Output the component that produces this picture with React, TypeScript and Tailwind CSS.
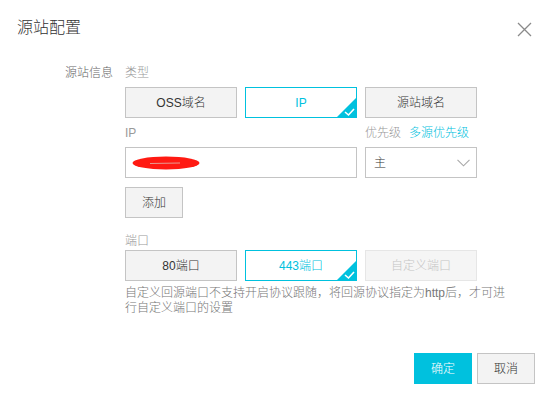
import { ReactNode } from "react";

const FONT = { fontFamily: '"Liberation Sans", "Noto Sans CJK SC", sans-serif' };

const CheckCorner = () => (
  <svg
    className="absolute -right-px -bottom-px"
    width="21"
    height="21"
    viewBox="0 0 21 21"
  >
    <polygon points="21,0 21,21 0,21" fill="#00c1de" />
    <path d="M9 15 L12.5 18 L18 12" fill="none" stroke="#fff" strokeWidth="1.6" />
  </svg>
);

const OptionButton = ({
  children,
  active,
  disabled,
}: {
  children: ReactNode;
  active?: boolean;
  disabled?: boolean;
}) => {
  if (active) {
    return (
      <div className="relative flex h-[31px] w-[112px] items-center justify-center border border-[#00c1de] bg-white text-[12px] text-[#00c1de]">
        {children}
        <CheckCorner />
      </div>
    );
  }
  if (disabled) {
    return (
      <div className="flex h-[31px] w-[112px] items-center justify-center border border-[#e6e6e6] bg-[#f5f5f5] text-[12px] text-[#c5c5c5]">
        {children}
      </div>
    );
  }
  return (
    <div className="flex h-[31px] w-[112px] items-center justify-center border border-[#c4c4c4] bg-[#f3f3f3] text-[12px] text-[#333]">
      {children}
    </div>
  );
};

export default function App() {
  return (
    <div className="relative h-[402px] w-[552px] overflow-hidden bg-white font-light" style={FONT}>
      {/* header */}
      <div className="flex items-center justify-between pl-[17px] pr-[20px] pt-[18px]">
        <h1 className="text-[16px] leading-[20px] text-[#333]">源站配置</h1>
        <svg width="15" height="15" viewBox="0 0 15 15" className="mt-[2px]">
          <path d="M1 1 L14 14 M14 1 L1 14" stroke="#8a8a8a" strokeWidth="1.3" fill="none" />
        </svg>
      </div>

      {/* body */}
      <div className="mt-[26px] flex gap-[12px]">
        <div className="w-[113px] text-right text-[12px] leading-[18px] text-[#666]">源站信息</div>
        <div className="flex flex-col">
          <div className="text-[12px] leading-[18px] text-[#999]">类型</div>
          <div className="mt-[5px] flex gap-[8px]">
            <OptionButton>OSS域名</OptionButton>
            <OptionButton active>IP</OptionButton>
            <OptionButton>源站域名</OptionButton>
          </div>

          <div className="mt-[6px] flex gap-[8px] text-[12px] leading-[18px]">
            <div className="w-[232px] text-[#999]">IP</div>
            <div className="flex gap-[8px]">
              <span className="text-[#999]">优先级</span>
              <span className="text-[#00c1de]">多源优先级</span>
            </div>
          </div>
          <div className="mt-[5px] flex gap-[8px]">
            <div className="flex h-[31px] w-[232px] items-center border border-[#c4c4c4] bg-white pl-[6px]">
              <svg width="68" height="14" viewBox="0 0 68 14">
                <ellipse cx="34" cy="7" rx="33.5" ry="6.5" fill="#ff1a12" />
                <path d="M18 7.5 L48 7" stroke="#e89a90" strokeWidth="1" />
              </svg>
            </div>
            <div className="flex h-[31px] w-[112px] items-center justify-between border border-[#c4c4c4] bg-white pl-[8px] pr-[6px] text-[12px] text-[#333]">
              <span>主</span>
              <svg width="13" height="8" viewBox="0 0 13 8">
                <path d="M0.5 0.8 L6.5 6.8 L12.5 0.8" fill="none" stroke="#a8a8a8" strokeWidth="1.1" />
              </svg>
            </div>
          </div>

          <div className="mt-[9px] flex h-[31px] w-[58px] items-center justify-center border border-[#c4c4c4] bg-[#f3f3f3] text-[12px] text-[#333]">
            添加
          </div>

          <div className="mt-[15px] text-[12px] leading-[17px] text-[#999]">端口</div>
          <div className="flex gap-[8px]">
            <OptionButton>80端口</OptionButton>
            <OptionButton active>443端口</OptionButton>
            <OptionButton disabled>自定义端口</OptionButton>
          </div>
          <p className="mt-[5px] w-[386px] text-[12px] leading-[15px] text-[#777]">
            自定义回源端口不支持开启协议跟随，将回源协议指定为http后，才可进行自定义端口的设置
          </p>
        </div>
      </div>

      {/* footer */}
      <div className="mt-[37px] flex justify-end gap-[5px] pr-[17px]">
        <div className="flex h-[31px] w-[58px] items-center justify-center bg-[#00c1de] text-[12px] text-white">
          确定
        </div>
        <div className="flex h-[31px] w-[58px] items-center justify-center border border-[#c4c4c4] bg-[#f3f3f3] text-[12px] text-[#333]">
          取消
        </div>
      </div>
    </div>
  );
}
